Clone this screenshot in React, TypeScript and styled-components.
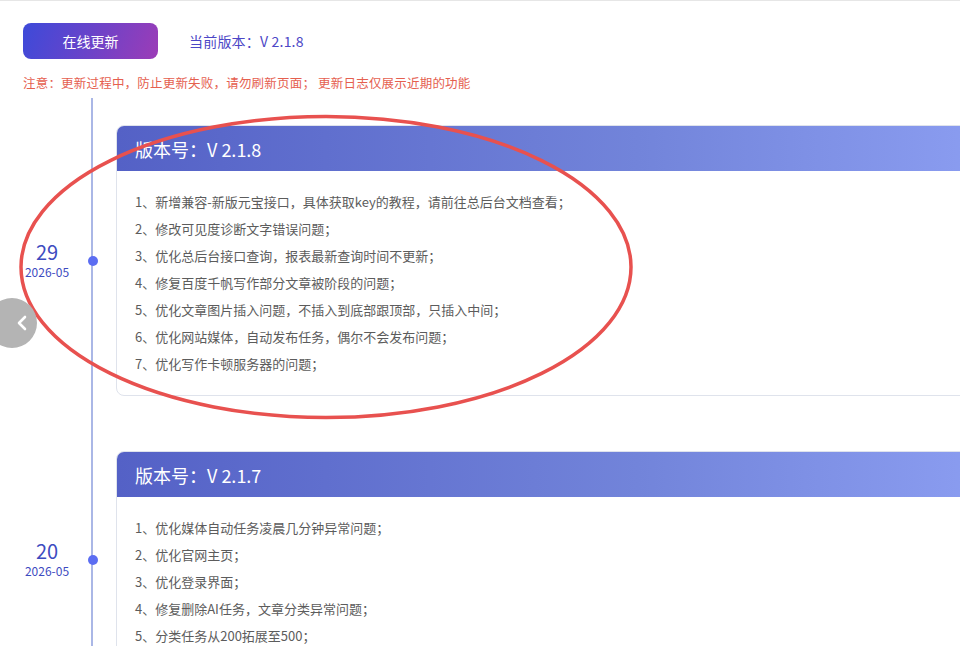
import styled, { createGlobalStyle } from "styled-components";
import { ChevronLeft } from "lucide-react";

const GlobalStyle = createGlobalStyle`
  html, body {
    margin: 0;
    padding: 0;
    background: #fff;
    overflow: hidden;
  }
  body {
    font-family: "Microsoft YaHei", "Noto Sans CJK SC", "Noto Sans", sans-serif;
  }
`;

const Page = styled.div`
  position: relative;
  width: 1160px;
  height: 646px;
  border-top: 1px solid #e6e6e6;
  box-sizing: border-box;
  padding: 22px 0 0 23px;
`;

const TopBar = styled.div`
  display: flex;
  align-items: center;
  gap: 31px;
`;

const UpdateButton = styled.button`
  width: 135px;
  height: 36px;
  border: none;
  border-radius: 8px;
  background: linear-gradient(110deg, #3d4ad9 0%, #6a43c9 50%, #9c3cb7 100%);
  color: #fff;
  font-family: inherit;
  font-size: 14px;
  cursor: pointer;
`;

const Version = styled.span`
  color: #4c47c6;
  font-size: 14px;
  letter-spacing: 0.2px;
`;

const Notice = styled.div`
  margin-top: 15px;
  color: #e5604f;
  font-size: 12.5px;
  line-height: 18px;
  letter-spacing: 0.2px;
  white-space: pre;
`;

const Timeline = styled.div`
  margin-top: 6px;
`;

const Item = styled.div`
  display: grid;
  grid-template-columns: 48px 42px 1fr;
`;

const DateBox = styled.div`
  align-self: center;
  display: flex;
  flex-direction: column;
  align-items: center;
  color: #3d4bbf;
  white-space: nowrap;
`;

const Day = styled.div`
  font-size: 20px;
  line-height: 20px;
`;

const Month = styled.div`
  margin-top: 2px;
  font-size: 12px;
  line-height: 16px;
`;

const Axis = styled.div`
  display: flex;
  align-items: center;
  justify-content: center;
  background: linear-gradient(
    to right,
    transparent 20px,
    #aab7e6 20px,
    #aab7e6 22px,
    transparent 22px
  );
`;

const Dot = styled.span`
  width: 10px;
  height: 10px;
  border-radius: 50%;
  background: #5b6df2;
  margin-left: 1px;
`;

const CardCell = styled.div`
  padding: 27px 0 28px 3px;
`;

const Card = styled.div`
  border: 1px solid #dfe3ec;
  border-radius: 8px;
  overflow: hidden;
  background: #fff;
`;

const CardHeader = styled.div`
  height: 45px;
  display: flex;
  align-items: center;
  padding-left: 18px;
  color: #fff;
  font-size: 18px;
  background: linear-gradient(90deg, #5461c6 0%, #7284da 50%, #8a9cf0 82%, #8fa1f2 100%);
`;

const CardBody = styled.div`
  padding: 17px 18px 18px;
`;

const Line = styled.div`
  color: #5c5c5c;
  font-size: 13px;
  line-height: 27px;
  white-space: nowrap;
`;

const Annotation = styled.svg`
  position: absolute;
  left: 18px;
  top: 112px;
  pointer-events: none;
`;

const SideArrow = styled.div`
  position: absolute;
  left: -13px;
  top: 297px;
  width: 50px;
  height: 50px;
  border-radius: 50%;
  background: #b4b4b4;
  display: flex;
  align-items: center;
  justify-content: flex-end;
  padding-right: 3px;
  box-sizing: border-box;
  color: #fff;
`;

interface Release {
  version: string;
  day: string;
  month: string;
  notes: string[];
}

const releases: Release[] = [
  {
    version: "V 2.1.8",
    day: "29",
    month: "2026-05",
    notes: [
      "1、新增兼容-新版元宝接口，具体获取key的教程，请前往总后台文档查看；",
      "2、修改可见度诊断文字错误问题；",
      "3、优化总后台接口查询，报表最新查询时间不更新；",
      "4、修复百度千帆写作部分文章被阶段的问题；",
      "5、优化文章图片插入问题，不插入到底部跟顶部，只插入中间；",
      "6、优化网站媒体，自动发布任务，偶尔不会发布问题；",
      "7、优化写作卡顿服务器的问题；",
    ],
  },
  {
    version: "V 2.1.7",
    day: "20",
    month: "2026-05",
    notes: [
      "1、优化媒体自动任务凌晨几分钟异常问题；",
      "2、优化官网主页；",
      "3、优化登录界面；",
      "4、修复删除AI任务，文章分类异常问题；",
      "5、分类任务从200拓展至500；",
    ],
  },
];

const App = () => {
  return (
    <Page>
      <GlobalStyle />
      <TopBar>
        <UpdateButton>在线更新</UpdateButton>
        <Version>当前版本：V 2.1.8</Version>
      </TopBar>
      <Notice>注意：更新过程中，防止更新失败，请勿刷新页面； 更新日志仅展示近期的功能</Notice>
      <Timeline>
        {releases.map((r) => (
          <Item key={r.version}>
            <DateBox>
              <Day>{r.day}</Day>
              <Month>{r.month}</Month>
            </DateBox>
            <Axis>
              <Dot />
            </Axis>
            <CardCell>
              <Card>
                <CardHeader>版本号：{r.version}</CardHeader>
                <CardBody>
                  {r.notes.map((n) => (
                    <Line key={n}>{n}</Line>
                  ))}
                </CardBody>
              </Card>
            </CardCell>
          </Item>
        ))}
      </Timeline>
      <Annotation width="620" height="312" viewBox="0 0 620 312">
        <ellipse
          cx="308"
          cy="154"
          rx="305"
          ry="150.5"
          fill="none"
          stroke="#e8514f"
          strokeWidth="3.5"
        />
      </Annotation>
      <SideArrow>
        <ChevronLeft size={24} strokeWidth={2.6} />
      </SideArrow>
    </Page>
  );
};

export default App;
